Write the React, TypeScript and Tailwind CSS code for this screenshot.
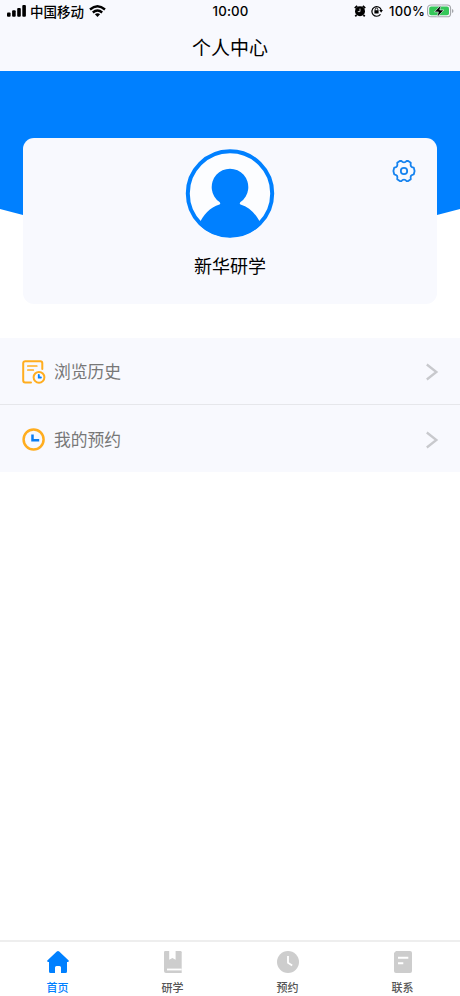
import type { ReactNode } from "react";

interface MenuRowProps {
  icon: ReactNode;
  label: string;
}

interface TabProps {
  icon: ReactNode;
  label: string;
  active?: boolean;
}

function StatusBar() {
  return (
    <div className="flex h-[22px] items-center justify-between pl-[7px] pr-[6px] text-black">
      <div className="flex w-[170px] items-center">
        <svg width="19" height="12" viewBox="0 0 19 12" fill="currentColor">
          <rect x="0" y="7.5" width="3.6" height="4.2" rx="1" />
          <rect x="5.1" y="5.3" width="3.6" height="6.4" rx="1" />
          <rect x="10.2" y="2.9" width="3.6" height="8.8" rx="1" />
          <rect x="15.3" y="0" width="3.6" height="11.7" rx="1" />
        </svg>
        <span className="-mt-px ml-1 text-[13.5px] leading-5 font-medium">中国移动</span>
        <svg className="ml-[5px]" width="17" height="12" viewBox="0 0 17 12">
          <g fill="none" stroke="currentColor" strokeWidth="2.4">
            <path d="M1 4.5Q8.5-1.9 16 4.5" />
            <path d="M3.8 7.5Q8.5 3.6 13.2 7.5" />
          </g>
          <path d="M5.9 9.2Q8.5 7.3 11.1 9.2L8.5 12Z" fill="currentColor" />
        </svg>
      </div>
      <span className="font-[Inter] text-[13.3px] leading-5 font-medium tracking-[0.1px]">10:00</span>
      <div className="flex w-[170px] items-center justify-end">
        <svg width="12" height="12" viewBox="0 0 12 12">
          <circle cx="6" cy="6.3" r="5" fill="currentColor" />
          <path d="M.8 3.1 3.2.8M8.8.8l2.4 2.3M2.5 10 1.3 11.4M9.5 10l1.2 1.4" stroke="currentColor" strokeWidth="1.8" />
          <path d="M6 3.6v3H3.8" fill="none" stroke="#f8f9fe" strokeWidth=".8" />
        </svg>
        <svg className="ml-[5px]" width="12" height="12" viewBox="0 0 12 12">
          <path d="M9.5 9.4A4.8 4.8 0 1 1 10.3 5" fill="none" stroke="currentColor" strokeWidth="1.2" />
          <path d="M8.3 5.1h3.6l-1.8 2.6Z" fill="currentColor" />
          <rect x="3.4" y="5.3" width="4.2" height="3.2" rx=".5" fill="currentColor" />
          <path d="M4.2 5.5V4.4a1.3 1.3 0 0 1 2.6 0v1.1" fill="none" stroke="currentColor" strokeWidth=".9" />
        </svg>
        <span className="ml-[6px] font-[Inter] text-[13px] leading-5 font-medium tracking-[0.2px]">100%</span>
        <svg className="ml-[2px]" width="27" height="14" viewBox="0 0 27 14">
          <rect x=".6" y="1" width="23" height="11.8" rx="3.4" fill="none" stroke="#a4a6aa" strokeWidth="1.1" />
          <rect x="2.2" y="2.6" width="19.8" height="8.6" rx="2" fill="#35c759" />
          <path d="M25 5v4q1.5-.6 1.5-2T25 5Z" fill="#a4a6aa" />
          <path d="M14 .9 7.4 7.9h4l-1.3 5.3L16.8 6h-4Z" fill="currentColor" stroke="#f8f9fe" strokeWidth=".6" />
        </svg>
      </div>
    </div>
  );
}

function Avatar() {
  return (
    <svg width="90" height="90" viewBox="0 0 90 90">
      <circle cx="45" cy="45.5" r="42.2" fill="#fcfdff" stroke="#0080ff" strokeWidth="4" />
      <path
        d="M14 76.5C18 67 25 59.5 34.5 56.6Q36 55.5 34.5 54A18.3 18.3 0 1 1 55.5 54Q54 55.5 55.5 56.6C65 59.5 72 67 76 76.5A44 44 0 0 1 14 76.5Z"
        fill="#0080ff"
      />
    </svg>
  );
}

function GearIcon() {
  return (
    <svg width="24" height="24" viewBox="0 0 24 24" fill="none" stroke="#1683ef" strokeWidth="1.8" strokeLinejoin="round">
      <path d="M7.8 2 9.3 1.8Q10.4 3.4 12 3.4T14.7 1.8L16.2 2 18.8 3.8Q18.3 6 19 7.2T21.8 8.7L22.6 12 21.8 15.3Q19.7 15.6 19 16.8T18.8 20.2L16.2 22 14.7 22.2Q13.6 20.6 12 20.6T9.3 22.2L7.8 22 5.2 20.2Q5.7 18 5 16.8T2.2 15.3L1.4 12 2.2 8.7Q4.3 8.4 5 7.2T5.2 3.8Z" />
      <circle cx="12" cy="12" r="3.2" />
    </svg>
  );
}

function HistoryIcon() {
  return (
    <svg width="24" height="24" viewBox="0 0 24 24" fill="none" strokeLinecap="round">
      <g stroke="#ffad1f" strokeWidth="2">
        <path d="M9 22.5H3.2a2 2 0 0 1-2-2V3.2a2 2 0 0 1 2-2h15.1a2 2 0 0 1 2 2V9" />
        <path d="M5.8 6h9M5.8 10h5.5" strokeWidth="1.7" />
        <circle cx="17" cy="17.3" r="5.4" />
      </g>
      <path d="M16.8 14.9v2.6h2.1" stroke="#0080ff" strokeWidth="1.9" />
    </svg>
  );
}

function ClockIcon() {
  return (
    <svg width="24" height="24" viewBox="0 0 24 24" fill="none">
      <circle cx="11.6" cy="11.5" r="10" stroke="#ffad1f" strokeWidth="2.5" />
      <path d="M10.5 6.5v5.7h6.7" stroke="#0b7cf0" strokeWidth="2.5" />
    </svg>
  );
}

function HomeIcon() {
  return (
    <svg width="22" height="22" viewBox="0 0 22 22" fill="#0080ff">
      <path d="M9.8.6Q11-.4 12.2.6L21.7 9.4Q22.2 11 20.7 11H20v9.5q0 1.5-1.5 1.5H14v-5.5Q14 15 12.5 15h-3Q8 15 8 16.5V22H3.5Q2 22 2 20.5V11h-.7Q-.2 11 .3 9.4Z" />
    </svg>
  );
}

function BookIcon() {
  return (
    <svg width="22" height="22" viewBox="0 0 22 22">
      <path d="M3.2 0H18.5q1.2 0 1.2 1.2V22H4q-2-.2-2-2V1.2Q2 0 3.2 0Z" fill="#cdcdcd" />
      <path d="M7.2 0h6.4v8.8l-3.2-1.9-3.2 1.9Z" fill="#fff" />
      <path d="M5 17.6h14.7v1.8H5Z" fill="#fff" />
    </svg>
  );
}

function BookingIcon() {
  return (
    <svg width="22" height="22" viewBox="0 0 22 22" fill="none">
      <circle cx="11" cy="11" r="11" fill="#cdcdcd" />
      <path d="M11 5v6.8l4.2 2.7" stroke="#fff" strokeWidth="1.8" />
    </svg>
  );
}

function ContactIcon() {
  return (
    <svg width="22" height="22" viewBox="0 0 22 22">
      <path d="M4 0h14q2 0 2 2v18q0 2-2 2H4q-2 0-2-2V2Z" fill="#cdcdcd" />
      <path d="M6 6.8h10.3M6 12.2h5.3" stroke="#fff" strokeWidth="2" />
    </svg>
  );
}

function MenuRow({ icon, label }: MenuRowProps) {
  return (
    <div className="flex h-[67px] items-center pt-[2px] pl-[22px] pr-[21px]">
      {icon}
      <span className="-mt-[2px] ml-2 text-[16.8px] leading-6 text-[#777]">{label}</span>
      <svg className="ml-auto" width="14" height="18" viewBox="0 0 14 18" fill="none">
        <path d="m1.8 1.5 9.6 7.5-9.6 7.5" stroke="#c8c9cd" strokeWidth="2.3" />
      </svg>
    </div>
  );
}

function Tab({ icon, label, active = false }: TabProps) {
  return (
    <div className="flex flex-1 flex-col items-center pt-[9px]">
      {icon}
      <span
        className={
          active
            ? "mt-[6px] text-[11px] leading-4 font-medium text-[#0080ff]"
            : "mt-[6px] text-[11px] leading-4 font-medium text-[#555]"
        }
      >
        {label}
      </span>
    </div>
  );
}

export default function App() {
  return (
    <div className="flex h-[996px] w-[460px] flex-col overflow-hidden bg-white font-['Noto_Sans_CJK_SC',sans-serif]">
      <header className="h-[71px] shrink-0 bg-[#f8f9fe]">
        <StatusBar />
        <h1 className="flex h-[49px] items-center justify-center text-[19px] leading-7 text-black">
          个人中心
        </h1>
      </header>

      <div className="h-[199px] shrink-0 bg-[#0080ff] [clip-path:polygon(0_0,100%_0,100%_138px,50%_198px,0_138px)]" />

      <section className="relative mx-[23px] -mt-[132px] flex h-[166px] shrink-0 flex-col items-center rounded-[11px] bg-[#f8f9fe] pt-[10px]">
        <Avatar />
        <p className="mt-[13px] text-[18px] leading-7 text-black">新华研学</p>
        <button className="absolute top-[21px] right-[21px]">
          <GearIcon />
        </button>
      </section>

      <div className="mt-[34px] divide-y divide-[#e6e7eb] bg-[#f8f9fe]">
        <MenuRow icon={<HistoryIcon />} label="浏览历史" />
        <MenuRow icon={<ClockIcon />} label="我的预约" />
      </div>

      <nav className="mt-auto flex h-[56px] border-t-2 border-[#eee]">
        <Tab icon={<HomeIcon />} label="首页" active />
        <Tab icon={<BookIcon />} label="研学" />
        <Tab icon={<BookingIcon />} label="预约" />
        <Tab icon={<ContactIcon />} label="联系" />
      </nav>
    </div>
  );
}
